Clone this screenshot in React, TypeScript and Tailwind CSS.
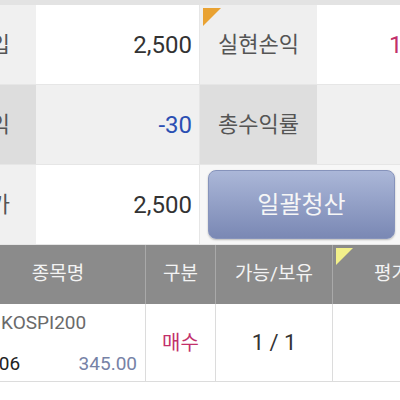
const font = { fontFamily: "Roboto, 'Noto Sans CJK KR', sans-serif" }

function TopRow({ label, value, valueColor, label2, value2, value2Color, dark, children }: {
    label: string
    value: string
    valueColor: string
    label2?: string
    value2?: string
    value2Color?: string
    dark?: boolean
    children?: React.ReactNode
}) {
    return (
        <div className="flex h-[80px] border-b border-[#e6e6e6]">
            <div className={`w-[116px] flex items-center justify-end pr-[26px] text-[22px] text-[#555] ${dark ? "bg-[#dddddd]" : "bg-[#f0f0f0]"}`}>
                {label}
            </div>
            <div className={`w-[164px] flex items-center justify-end pr-[7px] text-[24px] ${valueColor} ${dark ? "bg-[#f0f0f0]" : "bg-white"} border-r border-[#e6e6e6]`}>
                {value}
            </div>
            {children ? children : (
                <>
                    <div className={`relative w-[117px] flex items-center justify-center text-[22px] text-[#555] ${dark ? "bg-[#dedede]" : "bg-[#efefef]"}`}>
                        {label2 === "실현손익" && (
                            <svg className="absolute left-[3px] top-[3px]" width="18" height="18" viewBox="0 0 18 18">
                                <polygon points="0,0 18,0 0,18" fill="#e9a232" />
                            </svg>
                        )}
                        {label2}
                    </div>
                    <div className={`flex-1 flex items-center pl-[72px] text-[24px] ${value2Color} ${dark ? "bg-[#f0f0f0]" : "bg-white"}`}>
                        {value2}
                    </div>
                </>
            )}
        </div>
    )
}

export default function App() {
    return (
        <div className="w-[400px] h-[400px] overflow-hidden bg-white" style={font}>
            <div className="h-[5px] bg-[#e3e3e3]" />
            <div className="-ml-[80px] w-[600px]">
                <TopRow label="총매입" value="2,500" valueColor="text-[#333]" label2="실현손익" value2="10,000" value2Color="text-[#c2306b]" />
                <TopRow label="평가손익" value="-30" valueColor="text-[#2b4fb3]" label2="총수익률" value2="" dark />
                <TopRow label="총평가" value="2,500" valueColor="text-[#333]">
                    <div className="flex-1 flex items-center bg-[#f7f7f7] pl-[8px]">
                        <button className="w-[187px] h-[69px] rounded-[8px] border border-[#8693bb] bg-gradient-to-b from-[#abb7d8] to-[#7a88b4] text-[24px] text-[#f6f6f6] shadow-[0_1px_2px_rgba(0,0,0,0.25)]">
                            일괄청산
                        </button>
                    </div>
                </TopRow>
            </div>

            <div className="-ml-[29px] w-[600px]">
                <div className="flex h-[59px] bg-[#8b8b8b] text-[19px] text-[#f3f3f3]">
                    <div className="w-[175px] flex items-center justify-center border-r border-[#a9a9a9]">종목명</div>
                    <div className="w-[70px] flex items-center justify-center border-r border-[#a9a9a9]">구분</div>
                    <div className="w-[117px] flex items-center justify-center border-r border-[#a9a9a9]">가능/보유</div>
                    <div className="relative w-[117px] flex items-center justify-center">
                        <svg className="absolute left-[3px] top-[3px]" width="17" height="17" viewBox="0 0 17 17">
                            <polygon points="0,0 17,0 0,17" fill="#f2f08a" />
                        </svg>
                        평가
                    </div>
                </div>
                <div className="flex h-[78px] bg-white border-b border-[#dcdcdc]">
                    <div className="w-[175px] flex flex-col justify-center gap-[22px] border-r border-[#dcdcdc] text-[19px] leading-none">
                        <div className="pl-[30px] text-[#6a6a6a]">KOSPI200</div>
                        <div className="flex justify-between pr-[8px]">
                            <span className="-ml-[15px] text-[#222]">201906</span>
                            <span className="text-[#7682a6]">345.00</span>
                        </div>
                    </div>
                    <div className="w-[70px] flex items-center justify-center border-r border-[#dcdcdc] text-[20px] text-[#c2306b]">매수</div>
                    <div className="w-[117px] flex items-center justify-center border-r border-[#dcdcdc] text-[22px] text-[#333]">1 / 1</div>
                    <div className="w-[117px]" />
                </div>
            </div>
        </div>
    )
}
